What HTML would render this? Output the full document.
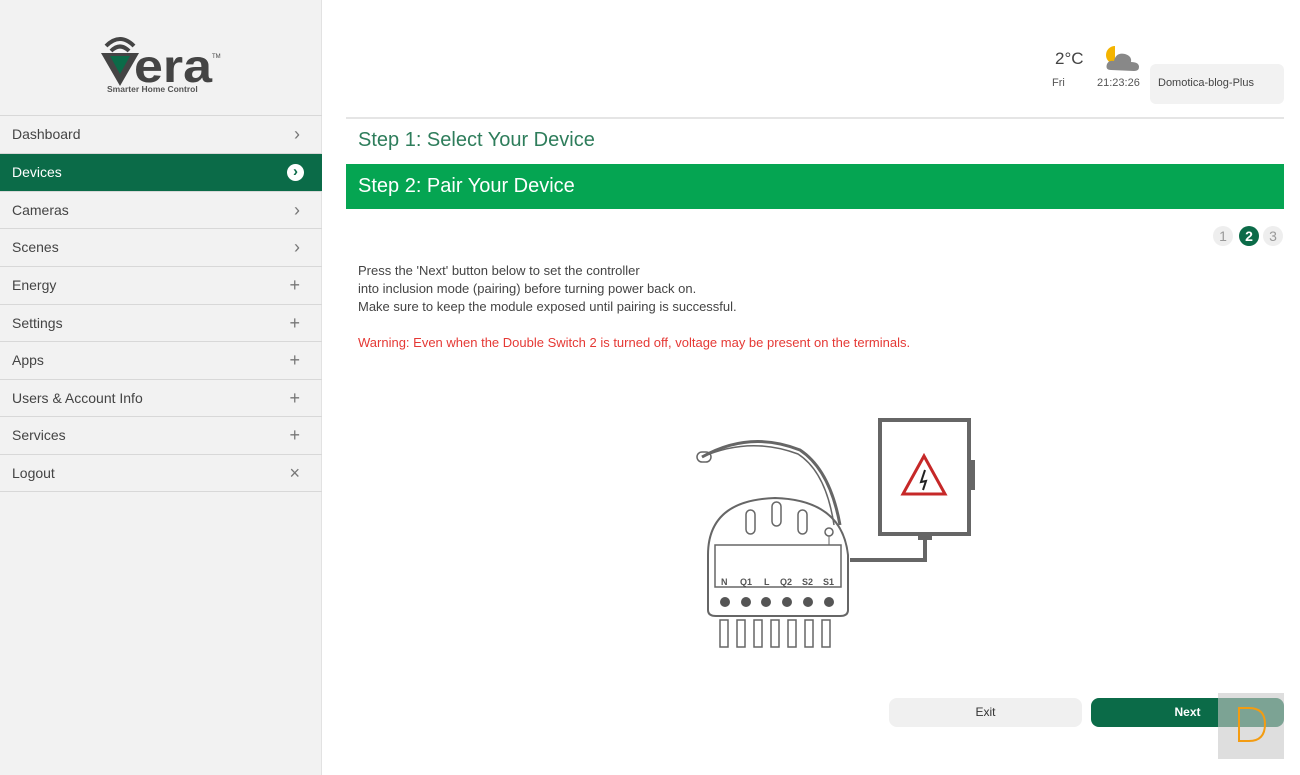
<!DOCTYPE html>
<html><head><meta charset="utf-8"><style>
*{margin:0;padding:0;box-sizing:border-box}
body{width:1300px;height:775px;background:#fff;font-family:"Liberation Sans",sans-serif;position:relative;overflow:hidden;color:#333}
#side{position:absolute;left:0;top:0;width:322px;height:775px;background:#f2f2f2;border-right:1px solid #e2e2e2}
.mi{position:absolute;left:0;width:322px;height:38px;border-top:1px solid #d8d8d8;font-size:14px;color:#444;padding-left:12px;line-height:37px}
.mi span{position:absolute;right:22px;top:0;color:#777;font-size:18px}
.act{background:#0b6b48;color:#fff}
.abs{position:absolute}
</style></head><body>
<div id="side">
<svg class="abs" style="left:98px;top:34px" width="130" height="62">
<path d="M8 12 Q22 -2 36 12" stroke="#444" stroke-width="4" fill="none"/>
<path d="M13 17 Q22 8 31 17" stroke="#444" stroke-width="4" fill="none"/>
<path d="M3 19 L22 52 L41 19 Z" fill="#444"/><path d="M12 22 L22 40 L32 22Z" fill="#0b6b48"/>
<text x="36" y="48" font-family="Liberation Sans" font-size="46" font-weight="bold" fill="#444" textLength="78" lengthAdjust="spacingAndGlyphs">era</text>
<text x="114" y="24" font-size="6" fill="#444">TM</text>
<text x="9" y="58" font-size="8.5" font-weight="bold" fill="#555">Smarter Home Control</text>
</svg>
<div class="mi" style="top:115px">Dashboard<span>›</span></div>
<div class="mi act" style="top:153px">Devices<span style="right:18px;top:10px;width:17px;height:17px;border-radius:50%;background:#fff;color:#0b6b48;line-height:16px;text-align:center;font-weight:bold;font-size:15px">›</span></div>
<div class="mi" style="top:191px">Cameras<span>›</span></div>
<div class="mi" style="top:228px">Scenes<span>›</span></div>
<div class="mi" style="top:266px">Energy<span>+</span></div>
<div class="mi" style="top:304px">Settings<span>+</span></div>
<div class="mi" style="top:341px">Apps<span>+</span></div>
<div class="mi" style="top:379px">Users &amp; Account Info<span>+</span></div>
<div class="mi" style="top:416px">Services<span>+</span></div>
<div class="mi" style="top:454px;border-bottom:1px solid #d8d8d8">Logout<span>×</span></div>
</div>
<div class="abs" style="left:1055px;top:49px;font-size:17px;color:#444">2°C</div>
<div class="abs" style="left:1052px;top:77px;font-size:11px;color:#555">Fri</div>
<svg class="abs" style="left:1103px;top:44px" width="40" height="30"><path d="M12 2 A9 9 0 1 0 12 20" fill="#f4b400"/><path d="M8 26 Q2 26 4 20 Q6 16 11 17 Q13 8 22 10 Q29 12 28 18 Q36 18 36 23 Q36 27 31 27Z" fill="#888"/></svg>
<div class="abs" style="left:1097px;top:77px;font-size:11px;color:#555">21:23:26</div>
<div class="abs" style="left:1150px;top:64px;width:134px;height:40px;background:#f2f2f2;border-radius:6px;font-size:11px;color:#444;padding:13px 8px">Domotica-blog-Plus</div>
<div class="abs" style="left:346px;top:117px;width:938px;height:2px;background:#e5e5e5"></div>
<div class="abs" style="left:358px;top:129px;font-size:20px;color:#2e7d5b">Step 1: Select Your Device</div>
<div class="abs" style="left:346px;top:164px;width:938px;height:45px;background:#05a552;color:#fff;font-size:20px;padding:11px 12px">Step 2: Pair Your Device</div>
<div class="abs" style="left:1213px;top:226px;width:20px;height:20px;border-radius:50%;background:#eee;color:#999;font-size:14px;text-align:center;line-height:20px">1</div>
<div class="abs" style="left:1239px;top:226px;width:20px;height:20px;border-radius:50%;background:#0b6b48;color:#fff;font-size:14px;font-weight:bold;text-align:center;line-height:20px">2</div>
<div class="abs" style="left:1263px;top:226px;width:20px;height:20px;border-radius:50%;background:#eee;color:#999;font-size:14px;text-align:center;line-height:20px">3</div>
<div class="abs" style="left:358px;top:262px;font-size:13px;color:#444;line-height:18px">Press the 'Next' button below to set the controller<br>into inclusion mode (pairing) before turning power back on.<br>Make sure to keep the module exposed until pairing is successful.</div>
<div class="abs" style="left:358px;top:335px;font-size:13px;color:#e53935">Warning: Even when the Double Switch 2 is turned off, voltage may be present on the terminals.</div>
<svg class="abs" style="left:680px;top:410px" width="310" height="250" fill="none" stroke="#666">
<path d="M22 47 Q70 20 120 40 Q150 60 160 115" stroke-width="3"/><path d="M22 47 Q70 26 118 44 Q146 62 154 115" stroke-width="1.5"/>
<rect x="17" y="42" width="14" height="10" rx="5" stroke-width="1.5"/>
<rect x="200" y="10" width="89" height="114" stroke-width="4"/>
<rect x="289" y="50" width="6" height="30" fill="#666" stroke="none"/>
<path d="M244 46 L223 84 L265 84Z" stroke="#c62828" stroke-width="3"/>
<path d="M245 60 L241 72 L246 71 L243 80" stroke="#222" stroke-width="2"/>
<rect x="238" y="124" width="14" height="6" fill="#666" stroke="none"/>
<path d="M245 130 V150 H170" stroke-width="4"/>
<path d="M28 200 V145 Q28 90 95 88 Q162 90 168 145 V200 Q168 206 160 206 H36 Q28 206 28 200Z" stroke-width="2"/>
<rect x="35" y="135" width="126" height="42" stroke-width="1.5"/>
<rect x="66" y="100" width="9" height="24" rx="4.5" stroke-width="1.5"/><rect x="92" y="92" width="9" height="24" rx="4.5" stroke-width="1.5"/><rect x="118" y="100" width="9" height="24" rx="4.5" stroke-width="1.5"/>
<circle cx="149" cy="122" r="4" stroke-width="1.5"/><path d="M149 126V135"/>
<g fill="#555" stroke="none" font-size="9" font-weight="bold" font-family="Liberation Sans"><text x="41" y="175">N</text><text x="60" y="175">Q1</text><text x="84" y="175">L</text><text x="100" y="175">Q2</text><text x="122" y="175">S2</text><text x="143" y="175">S1</text>
<circle cx="45" cy="192" r="5"/><circle cx="66" cy="192" r="5"/><circle cx="86" cy="192" r="5"/><circle cx="107" cy="192" r="5"/><circle cx="128" cy="192" r="5"/><circle cx="149" cy="192" r="5"/></g>
<g stroke-width="1.5"><rect x="40" y="210" width="8" height="27"/><rect x="57" y="210" width="8" height="27"/><rect x="74" y="210" width="8" height="27"/><rect x="91" y="210" width="8" height="27"/><rect x="108" y="210" width="8" height="27"/><rect x="125" y="210" width="8" height="27"/><rect x="142" y="210" width="8" height="27"/></g>
</svg>
<div class="abs" style="left:889px;top:698px;width:193px;height:29px;background:#f0f0f0;border-radius:8px;font-size:12px;text-align:center;line-height:29px;color:#333">Exit</div>
<div class="abs" style="left:1091px;top:698px;width:193px;height:29px;background:#0b6b48;border-radius:8px;font-size:12px;text-align:center;line-height:29px;color:#fff;font-weight:bold">Next</div>
<div class="abs" style="left:1218px;top:693px;width:66px;height:66px;background:rgba(200,200,200,.6)"></div>
<svg class="abs" style="left:1235px;top:705px" width="35" height="40"><path d="M4 3 V36 H14 Q30 36 30 19 Q30 3 14 3Z" stroke="#f39c12" stroke-width="2" fill="none"/></svg>
</body></html>
